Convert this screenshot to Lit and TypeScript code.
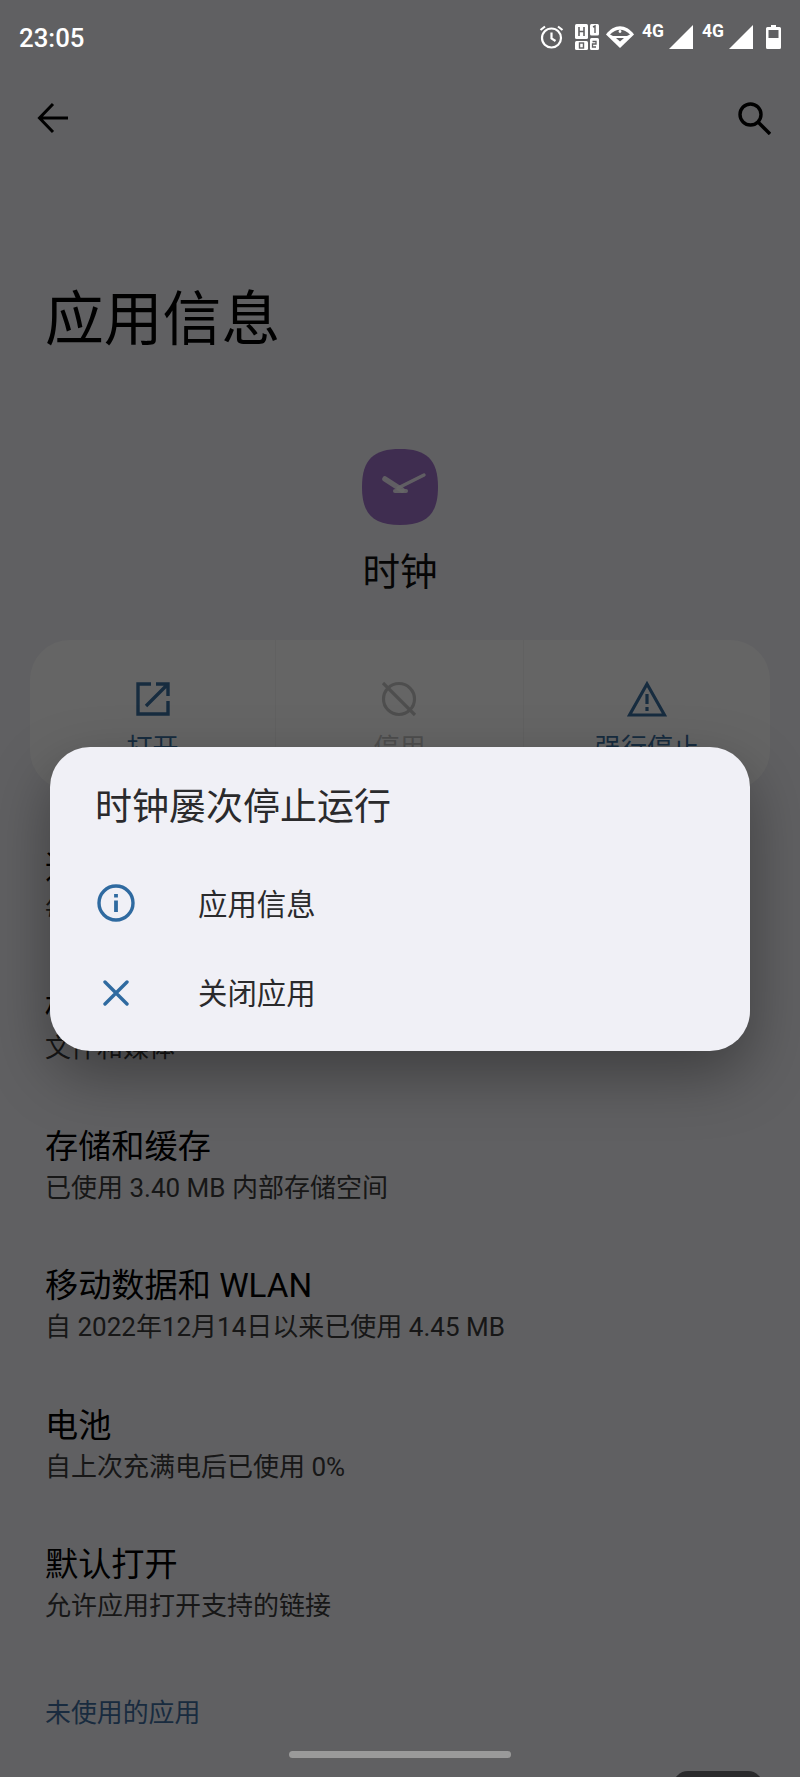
import { LitElement, html, css } from "lit";
import { customElement } from "lit/decorators.js";

@customElement("app-root")
export class AppRoot extends LitElement {
  static styles = css`
    :host { display: block; width: 800px; height: 1777px; position: relative; overflow: hidden; font-family: Roboto, "Noto Sans CJK SC", sans-serif; background: #f0f0f5; color: #000; }
    .page { display: flex; flex-direction: column; height: 1777px; }
    .toolbar { margin-top: 66px; height: 104px; padding: 0 29px 0 37px; display: flex; align-items: center; justify-content: space-between; }
    .toolbar svg { display: block; }
    h1 { margin: 115px 0 0 45px; font-size: 58.8px; line-height: 70px; font-weight: 400; }
    .app { margin-top: 94px; display: flex; flex-direction: column; align-items: center; }
    .app svg { display: block; }
    .app-name { margin-top: 24px; font-size: 37.5px; line-height: 46px; color: #111; }
    .card { margin: 45px 30px 0; height: 150px; background: #fdfdfd; border-radius: 40px; display: grid; grid-template-columns: 245px 248px 247px; }
    .act { display: flex; flex-direction: column; align-items: center; padding-top: 41px; gap: 11px; color: #3a6e9f; font-size: 26px; line-height: 40px; border-left: 1px solid #f3f3f3; }
    .act:first-child { border-left: none; }
    .act svg { display: block; }
    .act.off { color: #c4c4c4; }
    .act.off svg { margin-left: -2px; }
    .rows { margin-top: 28px; }
    .row { height: 139.5px; padding-left: 45px; display: flex; flex-direction: column; justify-content: center; box-sizing: border-box; }
    .t { font-size: 33.2px; line-height: 42px; color: #000; }
    .s { font-size: 26px; line-height: 40px; color: #3a3a3a; }
    .link { height: 110px; padding-left: 45px; display: flex; align-items: center; font-size: 25.9px; color: #3f6d9d; }
    .scrim { position: absolute; inset: 0; background: rgba(0, 0, 0, 0.6); }
    .status { position: absolute; left: 0; right: 0; top: 0; height: 66px; color: #fff; }
    .time { position: absolute; left: 19px; top: 22px; font-size: 25.8px; line-height: 32px; font-weight: 500; }
    .st { position: absolute; display: block; }
    .g4 { position: absolute; top: 22px; font-size: 17.5px; line-height: 18px; font-weight: 700; color: #fff; }
    .dialog { position: absolute; left: 50px; top: 747px; width: 700px; height: 304px; border-radius: 40px; background: #f0f0f6; box-shadow: 0 24px 60px rgba(0, 0, 0, 0.35); color: #2a2a2c; box-sizing: border-box; }
    .d-title { height: 112px; padding: 2px 0 0 45px; box-sizing: border-box; display: flex; align-items: center; font-size: 37px; }
    .item { height: 90px; display: grid; grid-template-columns: 148px 1fr; align-items: center; font-size: 29.4px; margin-top: -0.5px; }
    .label { padding-bottom: 4px; }
    .ico { width: 132px; display: flex; justify-content: center; padding-bottom: 1px; }
    .ico svg { display: block; }
    .pill { position: absolute; left: 289px; top: 1751px; width: 222px; height: 7px; border-radius: 4px; background: #9a9a9a; }
    .bubble { position: absolute; left: 673px; top: 1771px; width: 90px; height: 30px; border-radius: 18px; background: #2a2a2c; }
  `;

  render() {
    const rows = [
      ["通知", "每天大约 0 条通知"],
      ["权限", "文件和媒体"],
      ["存储和缓存", "已使用 3.40 MB 内部存储空间"],
      ["移动数据和 WLAN", "自 2022年12月14日以来已使用 4.45 MB"],
      ["电池", "自上次充满电后已使用 0%"],
      ["默认打开", "允许应用打开支持的链接"],
    ];
    return html`
      <div class="page">
        <div class="toolbar">
          <svg width="32" height="32" viewBox="0 0 32 32" fill="none" stroke="#000" stroke-width="3"><path d="M31 16H3M16 2 2.5 16 16 30"/></svg>
          <svg width="34" height="34" viewBox="0 0 34 34" fill="none" stroke="#000" stroke-width="3.4"><circle cx="13.5" cy="13.5" r="10.5"/><path d="M21 21 33 33"/></svg>
        </div>
        <h1>应用信息</h1>
        <div class="app">
          <svg width="76" height="76" viewBox="0 0 76 76">
            <path d="M38 0C64 0 76 10 76 38S64 76 38 76 0 66 0 38 12 0 38 0Z" fill="#9e70c8"/>
            <path d="M36 39 62 26" stroke="#fff" stroke-opacity=".85" stroke-width="3.4" stroke-linecap="round"/>
            <path d="M23 30 40 41" stroke="#fff" stroke-opacity=".85" stroke-width="5.5" stroke-linecap="round"/>
            <path d="M33 42H44" stroke="#fff" stroke-opacity=".85" stroke-width="4" stroke-linecap="round"/>
          </svg>
          <div class="app-name">时钟</div>
        </div>
        <div class="card">
          <div class="act">
            <svg width="36" height="36" viewBox="0 0 36 36" fill="none" stroke="#3a6e9f" stroke-width="3.4"><path d="M16 3H3V33H33V20M21 3H33V15M33 3 11 25"/></svg>
            <span>打开</span>
          </div>
          <div class="act off">
            <svg width="38" height="36" viewBox="0 0 38 36" fill="none" stroke="#c4c4c4" stroke-width="3.2"><circle cx="19" cy="18" r="15.5"/><path d="M3 2 35 34"/></svg>
            <span>停用</span>
          </div>
          <div class="act">
            <svg width="40" height="36" viewBox="0 0 40 36" fill="none" stroke="#3a6e9f" stroke-width="3.2"><path d="M20 3 37.5 34H2.5Z"/><path d="M20 13V23M20 26V30"/></svg>
            <span>强行停止</span>
          </div>
        </div>
        <div class="rows">
          ${rows.map(([t, s]) => html`<div class="row"><div class="t">${t}</div><div class="s">${s}</div></div>`)}
        </div>
        <div class="link">未使用的应用</div>
      </div>
      <div class="scrim"></div>
      <div class="status">
        <div class="time">23:05</div>
        <svg class="st" style="left:539px;top:24px" width="25" height="25" viewBox="0 0 25 25" fill="none" stroke="#fff" stroke-width="2.2"><circle cx="12.5" cy="14" r="9.5"/><path d="M12.5 8.5V14.5L16.5 17M1.5 6 6 2.5M23.5 6 19 2.5"/></svg>
        <svg class="st" style="left:575px;top:24px" width="24" height="26" viewBox="0 0 24 26"><rect x="0" y="0" width="13" height="15" rx="1.5" fill="#fff"/><rect x="15" y="0" width="9" height="11.5" rx="1.5" fill="#fff"/><rect x="0" y="17" width="13" height="9" rx="1.5" fill="#fff"/><rect x="15" y="14" width="9" height="12" rx="1.5" fill="#fff"/><path d="M4 3V12M9 3V12M4 7.5H9" stroke="#606062" stroke-width="1.6" fill="none"/><path d="M18 3 20 2V9" stroke="#606062" stroke-width="1.4" fill="none"/><rect x="4.5" y="19" width="4" height="5" fill="none" stroke="#606062" stroke-width="1.4"/><path d="M17.5 17.5H21V20H17.5V23H21" stroke="#606062" stroke-width="1.3" fill="none"/></svg>
        <svg class="st" style="left:606px;top:25px" width="28" height="23" viewBox="0 0 28 23"><path d="M14 23 0 9.5C8 -1.5 20 -1.5 28 9.5Z" fill="#fff"/><path d="M4 9.5C10 3 18 3 24 9.5L21 11H7Z" fill="#606062"/><path d="M14 20 5.5 11.5H22.5Z" fill="#fff"/><path d="M14 16.5 10 13H18Z" fill="#606062"/><circle cx="14" cy="6.5" r="1.4" fill="#fff"/></svg>
        <div class="g4" style="left:642px">4G</div>
        <svg class="st" style="left:669px;top:25px" width="24" height="24" viewBox="0 0 24 24"><path d="M24 0V24H0Z" fill="#fff"/></svg>
        <div class="g4" style="left:702px">4G</div>
        <svg class="st" style="left:729px;top:25px" width="24" height="24" viewBox="0 0 24 24"><path d="M24 0V24H0Z" fill="#fff"/></svg>
        <svg class="st" style="left:766px;top:25px" width="15" height="24" viewBox="0 0 15 24"><path d="M5 0H10V2H13.5Q15 2 15 3.5V22.5Q15 24 13.5 24H1.5Q0 24 0 22.5V3.5Q0 2 1.5 2H5Z" fill="#fff"/><rect x="2.5" y="5" width="10" height="8" fill="#606062"/></svg>
      </div>
      <div class="dialog">
        <div class="d-title">时钟屡次停止运行</div>
        <div class="item">
          <div class="ico"><svg width="38" height="38" viewBox="0 0 38 38" fill="none" stroke="#2f6aa0" stroke-width="3.4"><circle cx="19" cy="19" r="17"/><path d="M19 16.5V28" stroke-width="3.8"/><path d="M19 10V13.5" stroke-width="3.8"/></svg></div>
          <div class="label">应用信息</div>
        </div>
        <div class="item">
          <div class="ico"><svg width="26" height="26" viewBox="0 0 26 26" fill="none" stroke="#2f6aa0" stroke-width="3.4" stroke-linecap="round"><path d="M2 2 24 24M24 2 2 24"/></svg></div>
          <div class="label">关闭应用</div>
        </div>
      </div>
      <div class="pill"></div>
      <div class="bubble"></div>
    `;
  }
}
